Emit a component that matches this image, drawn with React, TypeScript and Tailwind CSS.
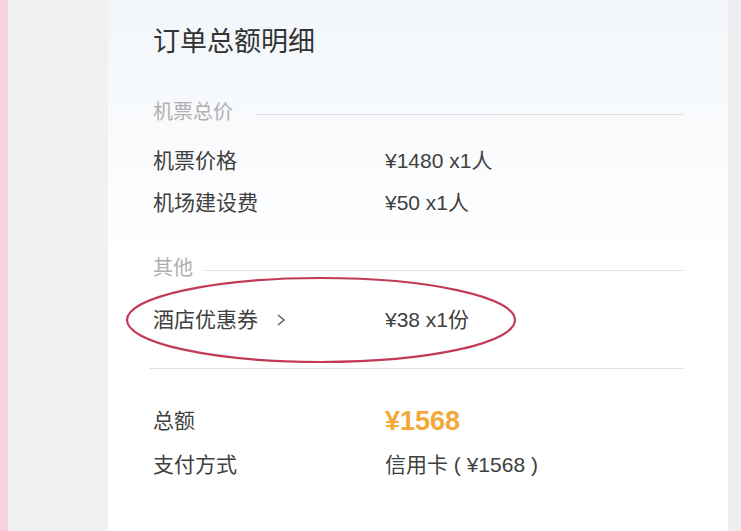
const font = { fontFamily: '"Liberation Sans", "Noto Sans CJK SC", sans-serif' };

const Row = ({ label, value, extra }: { label: string; value: React.ReactNode; extra?: React.ReactNode }) => (
  <div className="flex h-[42px] items-center text-[21px] text-[#404040]">
    <div className="flex w-[232px] items-center">
      {label}
      {extra}
    </div>
    <div>{value}</div>
  </div>
);

const Section = ({ title, lineStart }: { title: string; lineStart: string }) => (
  <div className="flex h-[30px] items-center text-[20px] text-[#b0b0b0]">
    <span>{title}</span>
    <div className={`${lineStart} mt-[4px] h-px flex-1 bg-[#e0e0e0]`} />
  </div>
);

export default function App() {
  return (
    <div className="flex h-[531px] w-full overflow-hidden bg-white" style={font}>
      <div className="w-[8px] bg-[#f7d2de]" />
      <div className="w-[100px] bg-[#f1f1f1]" />
      <div className="relative flex-1 bg-linear-to-b from-[#f2f6fa] via-white to-white px-[45px]">
        <div className="pt-[24px] text-[27px] leading-[36px] text-[#333]">订单总额明细</div>

        <div className="mt-[37px]">
          <Section title="机票总价" lineStart="ml-[22px]" />
        </div>
        <div className="mt-[13px]">
          <Row label="机票价格" value="¥1480 x1人" />
          <Row label="机场建设费" value="¥50 x1人" />
        </div>

        <div className="mt-[29px]">
          <Section title="其他" lineStart="ml-[12px]" />
        </div>
        <div className="mt-[16px]">
          <Row
            label="酒店优惠券"
            value="¥38 x1份"
            extra={
              <svg width="12" height="16" viewBox="0 0 12 16" className="ml-[17px]">
                <polyline points="3,3 9,8 3,13" fill="none" stroke="#666" strokeWidth="1.6" />
              </svg>
            }
          />
        </div>

        <div className="-ml-[3px] mt-[27px] h-px bg-[#e0e0e0]" />

        <div className="mt-[31px]">
          <Row
            label="总额"
            value={<span className="text-[27px] font-semibold text-[#f2a93a]">¥1568</span>}
          />
          <div className="mt-[2px]">
            <Row label="支付方式" value="信用卡 ( ¥1568 )" />
          </div>
        </div>

        <svg className="pointer-events-none absolute left-0 top-0" width="620" height="531">
          <ellipse cx="213" cy="320" rx="194" ry="42" fill="none" stroke="#c23a56" strokeWidth="2.2" />
        </svg>
      </div>
      <div className="w-[13px] bg-[#efeded]" />
    </div>
  );
}
